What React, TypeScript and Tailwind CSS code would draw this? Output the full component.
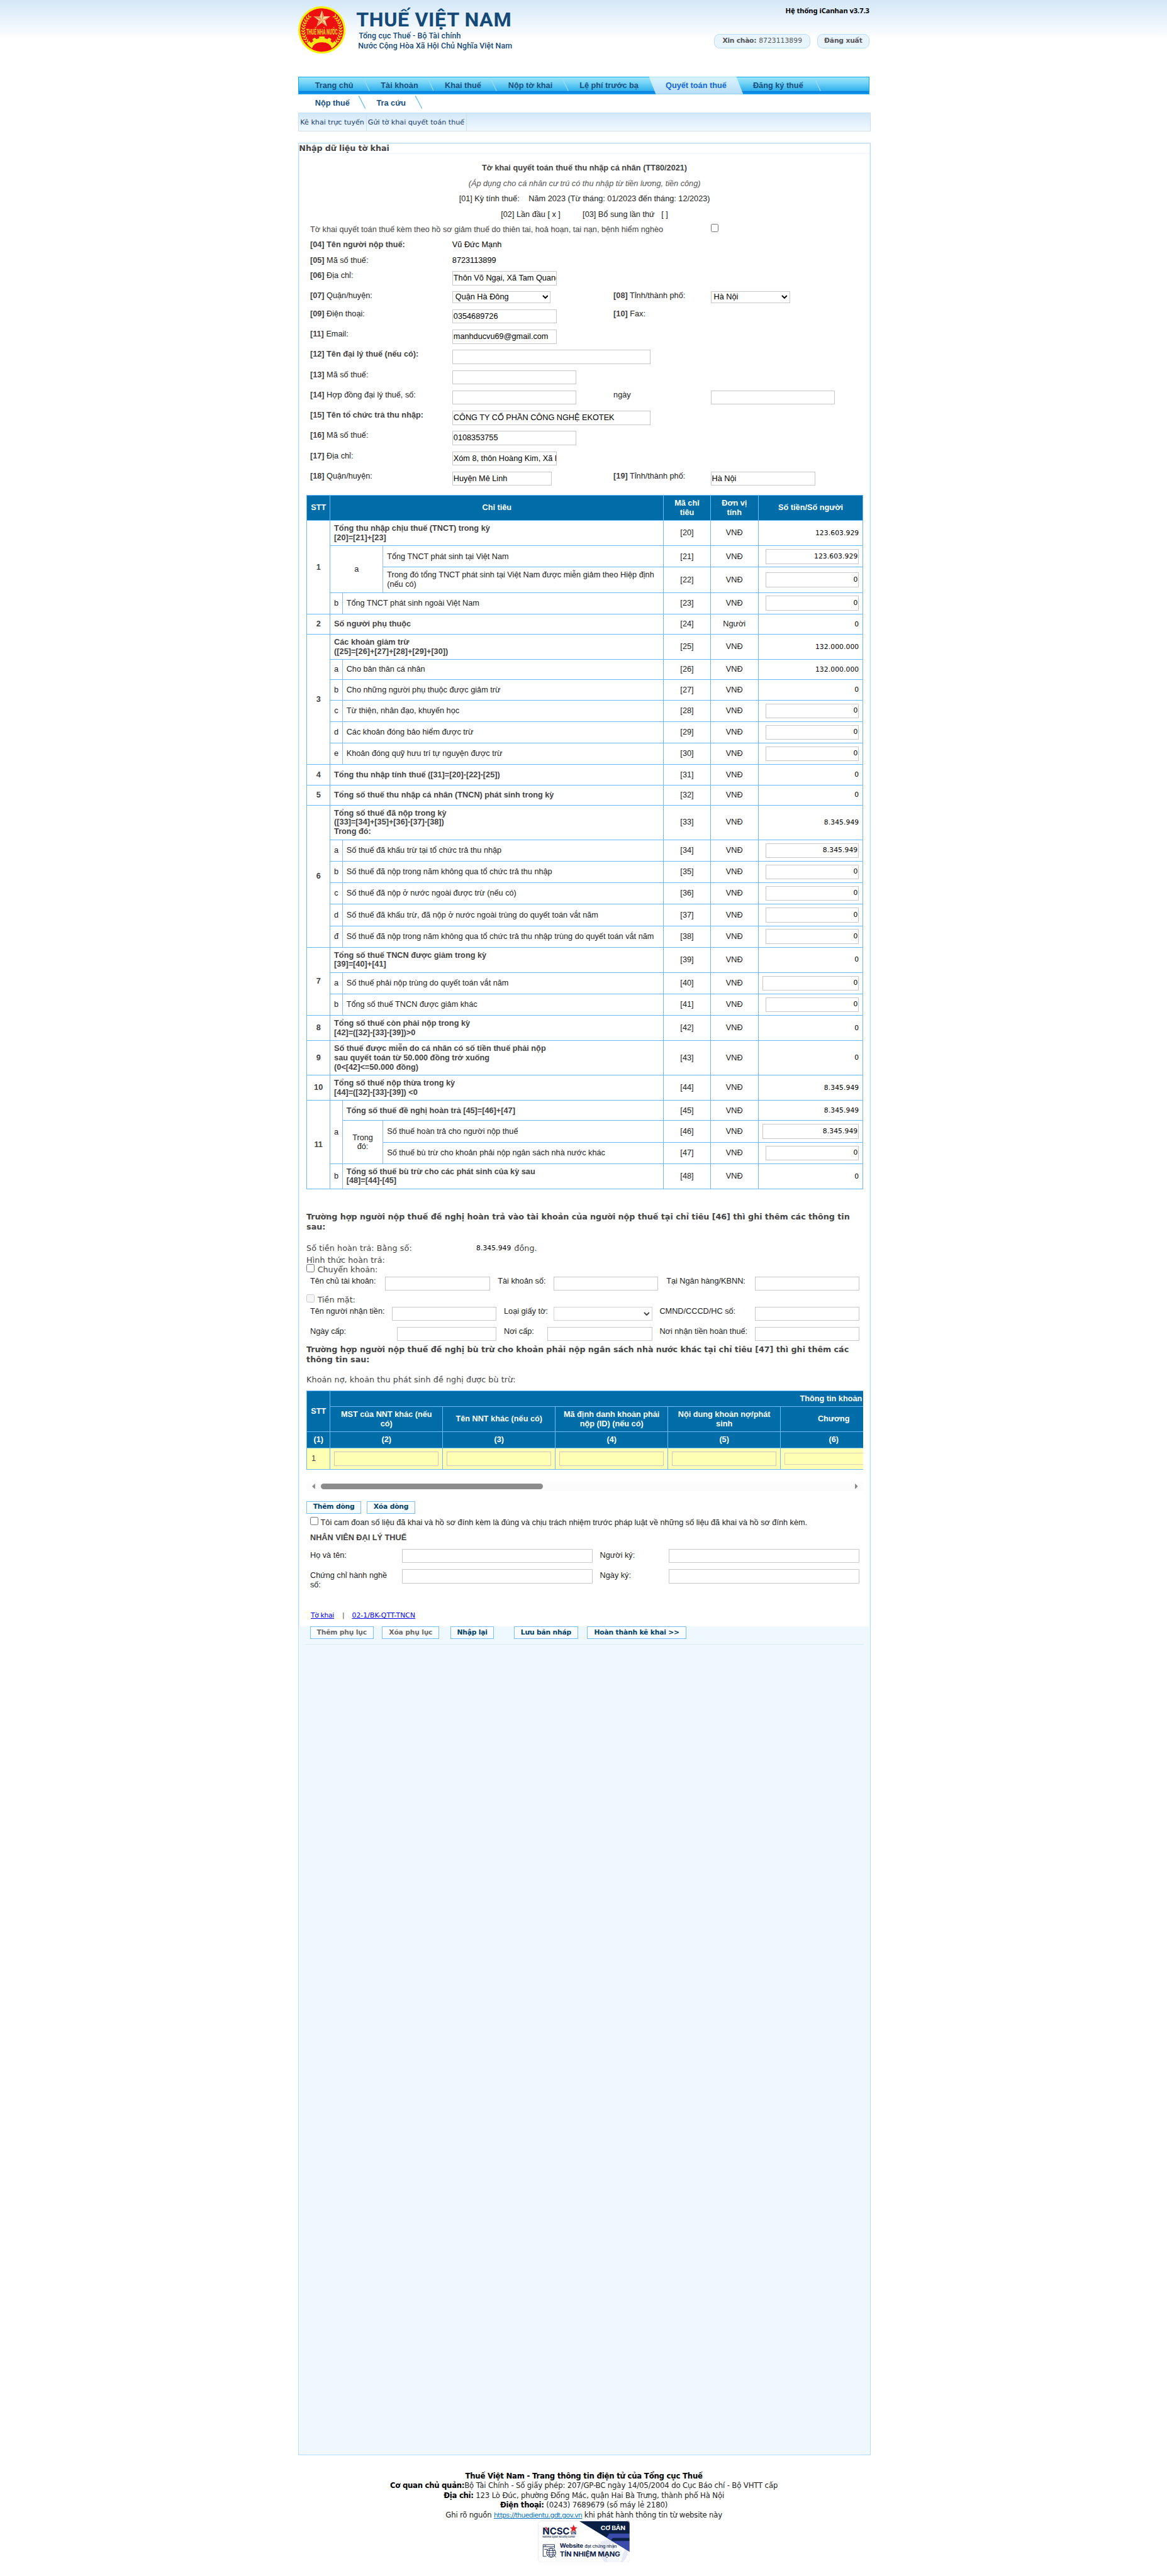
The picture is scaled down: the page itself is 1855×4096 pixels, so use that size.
import type { ReactNode } from "react";

const cx = (...c: (string | false | undefined)[]) => c.filter(Boolean).join(" ");

/* ---------- shared form controls ---------- */

function Box({ w, h = "h-[23px]", value = "", right, num }: { w: string; h?: string; value?: string; right?: boolean; num?: boolean }) {
  return (
    <div
      className={cx(
        "shrink-0 overflow-hidden whitespace-nowrap border border-[#c8c8c8] bg-white px-px text-black flex items-center",
        w,
        h,
        right && "justify-end",
        num ? "font-['DejaVu_Sans',sans-serif] text-[11px] tracking-[0.09px]" : "text-[13px]",
      )}
    >
      {value}
    </div>
  );
}

function Chevron() {
  return (
    <svg className="h-[7px] w-[10px]" viewBox="0 0 10 7" fill="none" stroke="currentColor" strokeWidth="2">
      <path d="M1 1l4 4 4-4" />
    </svg>
  );
}

function Select({ w, h = "h-[19px]", value = "", dim }: { w: string; h?: string; value?: string; dim?: boolean }) {
  return (
    <div className={cx("flex shrink-0 items-center justify-between border bg-white pl-1 pr-[3px] text-[13px]", w, h, dim ? "border-[#d4d4d4] text-[#444]" : "border-[#c8c8c8] text-black")}>
      <span>{value}</span>
      <Chevron />
    </div>
  );
}

function Check({ dim }: { dim?: boolean }) {
  return <div className={cx("size-[13px] shrink-0 rounded-[2.5px] border", dim ? "border-[#c9c9c9] bg-[#f6f6f6]" : "border-[#767676] bg-white")} />;
}

function Button({ w, children, dim }: { w: string; children: ReactNode; dim?: boolean }) {
  return (
    <div
      className={cx(
        "flex h-[21px] shrink-0 items-center justify-center whitespace-nowrap border border-[#79c0f9] bg-gradient-to-b from-white to-[#f3faff] pb-px font-['DejaVu_Sans',sans-serif] text-[11px] font-bold tracking-[-0.2px]",
        w,
        dim ? "text-[#6a6a6a]" : "text-[#004069]",
      )}
    >
      {children}
    </div>
  );
}

/* ---------- header ---------- */

const beads = Array.from({ length: 11 }, (_, i) => -42 + i * 8.4);

function Emblem() {
  return (
    <svg className="size-[77px] shrink-0" viewBox="0 0 77 77">
      <circle cx="38.5" cy="38.5" r="38.5" fill="#f8f20a" />
      <circle cx="38.5" cy="38.5" r="35.3" fill="#ee1010" />
      <g fill="none" stroke="#f3e21a" strokeWidth="1.6" strokeLinecap="round">
        {beads.map((a) => (
          <g key={a}>
            <path d="M8 37l-2.2-2.4M8.4 37l2.6-2.2" transform={`rotate(${a} 38.5 38.5)`} />
            <path d="M69 37l-2.6-2.2M69.2 37l2.2-2.4" transform={`rotate(${a} 38.5 38.5)`} />
          </g>
        ))}
      </g>
      <path d="M38.5 6.5l3.3 9.8 10.4.1-8.3 6.3 3 10-8.4-6-8.4 6 3-10-8.3-6.3 10.4-.1z" fill="#f4d9a0" />
      <path d="M38.5 6.5l3.3 9.8-3.3 6.5zM52.2 16.4l-8.3 6.3-5.4.1zM46.9 32.7l-8.4-6v-4zM30.1 32.7l3-10 5.4.1zM24.8 16.4l10.4-.1 3.3 6.5z" fill="#f08a4a" />
      <text x="38.5" y="46.5" textAnchor="middle" textLength="51" lengthAdjust="spacingAndGlyphs" fill="#f6d71c" className="font-['Roboto',sans-serif] text-[12.5px] font-bold">
        THUẾ NHÀ NƯỚC
      </text>
      <path
        d="M14 60l4-3.500 3 3 3.500-3-1.500-3 4-2.500 2.500 2.500 4.500-1.500v-3h9v3l4.500 1.500 2.500-2.500 4 2.500-1.500 3 3.500 3 3-3 4 3.500q-3.500 5-8.500 8.500-2.500-10-16-10t-16 10q-5-3.500-8.500-8.500z"
        fill="#f8ea14"
      />
    </svg>
  );
}

function Header() {
  return (
    <header className="flex h-[125px] w-[928px]">
      <div className="pt-[10px]">
        <Emblem />
      </div>
      <div className="ml-[17px] mt-[12px] whitespace-nowrap font-['Roboto',sans-serif] text-[#154a78]">
        <div className="h-[38px] text-[33px] font-bold leading-[39px] tracking-[0.6px]">THUẾ VIỆT NAM</div>
        <div className="ml-[4px] h-[16px] text-[12.7px] font-medium leading-[17px] tracking-[0.1px]">Tổng cục Thuế - Bộ Tài chính</div>
        <div className="ml-[3px] text-[12.7px] font-medium leading-[17px] tracking-[0.06px]">Nước Cộng Hòa Xã Hội Chủ Nghĩa Việt Nam</div>
      </div>
      <div className="ml-auto flex flex-col items-end font-['DejaVu_Sans',sans-serif] text-[11px]">
        <div className="mt-[10px] h-[45px] whitespace-nowrap font-['Noto_Sans',sans-serif] text-[11.5px] font-bold leading-[14px] tracking-[-0.1px] text-black">Hệ thống iCanhan v3.7.3</div>
        <div className="flex gap-[11px] whitespace-nowrap text-[#555]">
          <div className="flex h-[24px] w-[156px] items-center justify-center gap-1 rounded-[9px] border border-[#b9dcf8] bg-[#e9f5fe]">
            <b className="tracking-[-0.29px]">Xin chào:</b>
            <span className="tracking-[0.05px]">8723113899</span>
          </div>
          <div className="flex h-[24px] w-[85px] items-center justify-center rounded-[9px] border border-[#b9dcf8] bg-[#e9f5fe] font-bold tracking-[-0.2px]">Đăng xuất</div>
        </div>
      </div>
    </header>
  );
}

function Slash({ light }: { light?: boolean }) {
  return (
    <svg className="h-full w-[11px] shrink-0" viewBox="0 0 11 26" preserveAspectRatio="none" fill="none">
      <path d={light ? "M0 0l10.500 22" : "M0 1l11 23"} stroke={light ? "#9bdcf5" : "#5fc0ee"} strokeWidth="1.300" />
    </svg>
  );
}

const menu = [
  { t: "Trang chủ", w: "w-[82px]" },
  { t: "Tài khoản", w: "w-[78px]" },
  { t: "Khai thuế", w: "w-[77px]" },
  { t: "Nộp tờ khai", w: "w-[90px]" },
  { t: "Lệ phí trước bạ", w: "w-[116px]" },
  { t: "Quyết toán thuế", w: "", on: true },
  { t: "Đăng ký thuế", w: "w-[102px]" },
];

function Menu() {
  return (
    <>
      <nav className="flex h-[28px] w-[928px] whitespace-nowrap border border-[#0fa9ec] bg-[linear-gradient(180deg,#9de6fb_0%,#6fd0f5_38%,#2fb0ec_82%,#0c7ee2_86%,#1593e8_100%)] pl-[7px] text-[13px] font-bold leading-[26px] text-[#17507e]">
        {menu.map((m) =>
          m.on ? (
            <div
              key={m.t}
              className="-ml-[11px] -mr-[2px] -my-px flex h-[28px] w-[153px] shrink-0 bg-gradient-to-b from-[#daf5fd] to-[#b6dcf9] pl-[27px] leading-[28px] text-[#0f68dd] [clip-path:polygon(0_0,142px_0,153px_100%,11px_100%)]"
            >
              {m.t}
            </div>
          ) : (
            <div key={m.t} className="flex h-[26px] shrink-0">
              <span className={cx("pl-[18px]", m.w)}>
                <span className={m.t === "Trang chủ" ? "pl-[1px]" : ""}>{m.t}</span>
              </span>
              <span className="w-[15px]" />
              <Slash light />
            </div>
          ),
        )}
      </nav>
      <nav className="flex h-[30px] whitespace-nowrap pl-[27px] pt-px text-[13px] font-bold leading-[26px] text-[#17507e]">
        <span className="w-[71px]">Nộp thuế</span>
        <div className="h-[24px]">
          <Slash />
        </div>
        <span className="w-[81px] pl-[18px]">Tra cứu</span>
        <div className="h-[24px]">
          <Slash />
        </div>
      </nav>
      <div className="flex h-[31px] whitespace-nowrap border border-[#c5e1f8] border-b-[#d5dde4] bg-gradient-to-b from-[#d3e7f8] to-[#f1f9ff] font-['DejaVu_Sans',sans-serif] text-[11.4px] leading-[30px] text-[#17406e]">
        <span className="w-[110px] border-r border-[#c5e3fa] pl-[2px]">Kê khai trực tuyến</span>
        <span className="w-[163px] border-r border-[#c5e3fa] pl-[2px]">Gửi tờ khai quyết toán thuế</span>
      </div>
    </>
  );
}

/* ---------- taxpayer form ---------- */

function FormRow({ n, label, strong, children, n2, label2, extra, h = "h-[33px]" }: { n: string; label: string; strong?: boolean; children?: ReactNode; n2?: string; label2?: string; extra?: ReactNode; h?: string }) {
  return (
    <div className={cx("grid grid-cols-[231px_262px_158px_1fr] items-start whitespace-nowrap pl-[18px] pt-[5px] leading-[15px]", h)}>
      <div className={cx(strong && "font-bold")}>
        <b>{n}</b> <span className={strong ? "" : "text-[#222]"}>{label}</span>
      </div>
      <div className="text-black">{children}</div>
      <div>
        <b>{n2}</b> <span className="text-[#222]">{label2}</span>
      </div>
      <div>{extra}</div>
    </div>
  );
}

function TaxpayerForm() {
  return (
    <section className="text-[13px] text-[#444]">
      <div className="h-[25px] text-center font-bold leading-[24px]">Tờ khai quyết toán thuế thu nhập cá nhân (TT80/2021)</div>
      <div className="h-[25px] text-center italic leading-[24px] text-[#555]">(Áp dụng cho cá nhân cư trú có thu nhập từ tiền lương, tiền công)</div>
      <div className="flex h-[25px] justify-center leading-[24px] text-[#222]">
        <span>[01] Kỳ tính thuế:</span>
        <span className="ml-[15px]">Năm 2023 (Từ tháng: 01/2023 đến tháng: 12/2023)</span>
      </div>
      <div className="flex h-[25px] justify-center leading-[24px] text-[#222]">
        <span>[02] Lần đầu [ x ]</span>
        <span className="ml-[36px]">[03] Bổ sung lần thứ</span>
        <span className="ml-[11px]">[ ]</span>
      </div>
      <div className="flex h-[25px] pl-[18px] leading-[25px]">
        <span className="w-[651px] whitespace-nowrap">Tờ khai quyết toán thuế kèm theo hồ sơ giảm thuế do thiên tai, hoả hoạn, tai nạn, bệnh hiểm nghèo</span>
        <div className="pt-[3px]">
          <Check />
        </div>
      </div>
      <FormRow n="[04]" label="Tên người nộp thuế:" strong h="h-[25px]">Vũ Đức Mạnh</FormRow>
      <FormRow n="[05]" label="Mã số thuế:" h="h-[25px]">8723113899</FormRow>
      <FormRow n="[06]" label="Địa chỉ:"><Box w="w-[170px]" value="Thôn Võ Ngại, Xã Tam Quang" /></FormRow>
      <FormRow n="[07]" label="Quận/huyện:" h="h-[29px]" n2="[08]" label2="Tỉnh/thành phố:" extra={<Select w="w-[129px]" value="Hà Nội" />}>
        <Select w="w-[160px]" value="Quận Hà Đông" />
      </FormRow>
      <FormRow n="[09]" label="Điện thoại:" n2="[10]" label2="Fax:"><Box w="w-[170px]" value="0354689726" /></FormRow>
      <FormRow n="[11]" label="Email:"><Box w="w-[170px]" value="manhducvu69@gmail.com" /></FormRow>
      <FormRow n="[12]" label="Tên đại lý thuế (nếu có):" strong><Box w="w-[322px]" /></FormRow>
      <FormRow n="[13]" label="Mã số thuế:"><Box w="w-[202px]" /></FormRow>
      <div className="grid h-[33px] grid-cols-[231px_262px_158px_1fr] items-start whitespace-nowrap pl-[18px] pt-[5px] leading-[15px] text-[#222]">
        <div>
          <b className="text-[#444]">[14]</b> Hợp đồng đại lý thuế, số:
        </div>
        <Box w="w-[202px]" />
        <div>ngày</div>
        <Box w="w-[202px]" />
      </div>
      <FormRow n="[15]" label="Tên tổ chức trả thu nhập:" strong><Box w="w-[322px]" value="CÔNG TY CỔ PHẦN CÔNG NGHỆ EKOTEK" /></FormRow>
      <FormRow n="[16]" label="Mã số thuế:"><Box w="w-[202px]" value="0108353755" /></FormRow>
      <FormRow n="[17]" label="Địa chỉ:"><Box w="w-[170px]" value="Xóm 8, thôn Hoàng Kim, Xã Hoàng Kim" /></FormRow>
      <FormRow n="[18]" label="Quận/huyện:" n2="[19]" label2="Tỉnh/thành phố:" extra={<Box w="w-[170px]" value="Hà Nội" />}><Box w="w-[162px]" value="Huyện Mê Linh" /></FormRow>
    </section>
  );
}

/* ---------- declaration table ---------- */

type Row = {
  no?: string;
  span?: string;
  lead?: ReactNode;
  text: string;
  strong?: boolean;
  cols: string;
  code: string;
  unit?: string;
  value: string;
  input?: "n" | "w";
  h: string;
};

const line = "border-r border-b border-[#6ab9fb]";
const thin = "border-r border-b border-r-[#8fbfe6] border-b-[#6ab9fb]";

const Letter = ({ t, span = "" }: { t: string; span?: string }) => <div className={cx("flex items-center justify-center text-[#222]", thin, span)}>{t}</div>;

const rows: Row[] = [
  { no: "1", span: "row-span-4", text: "Tổng thu nhập chịu thuế (TNCT) trong kỳ\n[20]=[21]+[23]", strong: true, cols: "col-span-3", code: "20", value: "123.603.929", h: "h-[41px]" },
  { lead: <div className={cx("col-span-2 row-span-2 flex items-center justify-center text-[#222]", thin)}>a</div>, text: "Tổng TNCT phát sinh tại Việt Nam", cols: "col-span-1", code: "21", value: "123.603.929", input: "n", h: "h-[35px]" },
  { text: "Trong đó tổng TNCT phát sinh tại Việt Nam được miễn giảm theo Hiệp định\n(nếu có)", cols: "col-span-1", code: "22", value: "0", input: "n", h: "h-[41px]" },
  { lead: <Letter t="b" />, text: "Tổng TNCT phát sinh ngoài Việt Nam", cols: "col-span-2", code: "23", value: "0", input: "n", h: "h-[35px]" },
  { no: "2", text: "Số người phụ thuộc", strong: true, cols: "col-span-3", code: "24", unit: "Người", value: "0", h: "h-[33px]" },
  { no: "3", span: "row-span-6", text: "Các khoản giảm trừ\n([25]=[26]+[27]+[28]+[29]+[30])", strong: true, cols: "col-span-3", code: "25", value: "132.000.000", h: "h-[41px]" },
  { lead: <Letter t="a" />, text: "Cho bản thân cá nhân", cols: "col-span-2", code: "26", value: "132.000.000", h: "h-[33px]" },
  { lead: <Letter t="b" />, text: "Cho những người phụ thuộc được giảm trừ", cols: "col-span-2", code: "27", value: "0", h: "h-[33px]" },
  { lead: <Letter t="c" />, text: "Từ thiện, nhân đạo, khuyến học", cols: "col-span-2", code: "28", value: "0", input: "n", h: "h-[35px]" },
  { lead: <Letter t="d" />, text: "Các khoản đóng bảo hiểm được trừ", cols: "col-span-2", code: "29", value: "0", input: "n", h: "h-[35px]" },
  { lead: <Letter t="e" />, text: "Khoản đóng quỹ hưu trí tự nguyện được trừ", cols: "col-span-2", code: "30", value: "0", input: "n", h: "h-[35px]" },
  { no: "4", text: "Tổng thu nhập tính thuế ([31]=[20]-[22]-[25])", strong: true, cols: "col-span-3", code: "31", value: "0", h: "h-[33px]" },
  { no: "5", text: "Tổng số thuế thu nhập cá nhân (TNCN) phát sinh trong kỳ", strong: true, cols: "col-span-3", code: "32", value: "0", h: "h-[33px]" },
  { no: "6", span: "row-span-6", text: "Tổng số thuế đã nộp trong kỳ\n([33]=[34]+[35]+[36]-[37]-[38])\nTrong đó:", strong: true, cols: "col-span-3", code: "33", value: "8.345.949", h: "h-[56px]" },
  { lead: <Letter t="a" />, text: "Số thuế đã khấu trừ tại tổ chức trả thu nhập", cols: "col-span-2", code: "34", value: "8.345.949", input: "n", h: "h-[35px]" },
  { lead: <Letter t="b" />, text: "Số thuế đã nộp trong năm không qua tổ chức trả thu nhập", cols: "col-span-2", code: "35", value: "0", input: "n", h: "h-[35px]" },
  { lead: <Letter t="c" />, text: "Số thuế đã nộp ở nước ngoài được trừ (nếu có)", cols: "col-span-2", code: "36", value: "0", input: "n", h: "h-[35px]" },
  { lead: <Letter t="d" />, text: "Số thuế đã khấu trừ, đã nộp ở nước ngoài trùng do quyết toán vắt năm", cols: "col-span-2", code: "37", value: "0", input: "n", h: "h-[35px]" },
  { lead: <Letter t="đ" />, text: "Số thuế đã nộp trong năm không qua tổ chức trả thu nhập trùng do quyết toán vắt năm", cols: "col-span-2", code: "38", value: "0", input: "n", h: "h-[35px]" },
  { no: "7", span: "row-span-3", text: "Tổng số thuế TNCN được giảm trong kỳ\n[39]=[40]+[41]", strong: true, cols: "col-span-3", code: "39", value: "0", h: "h-[41px]" },
  { lead: <Letter t="a" />, text: "Số thuế phải nộp trùng do quyết toán vắt năm", cols: "col-span-2", code: "40", value: "0", input: "w", h: "h-[35px]" },
  { lead: <Letter t="b" />, text: "Tổng số thuế TNCN được giảm khác", cols: "col-span-2", code: "41", value: "0", input: "n", h: "h-[35px]" },
  { no: "8", text: "Tổng số thuế còn phải nộp trong kỳ\n[42]=([32]-[33]-[39])>0", strong: true, cols: "col-span-3", code: "42", value: "0", h: "h-[41px]" },
  { no: "9", text: "Số thuế được miễn do cá nhân có số tiền thuế phải nộp\nsau quyết toán từ 50.000 đồng trở xuống\n(0<[42]<=50.000 đồng)", strong: true, cols: "col-span-3", code: "43", value: "0", h: "h-[56px]" },
  { no: "10", text: "Tổng số thuế nộp thừa trong kỳ\n[44]=([32]-[33]-[39]) <0", strong: true, cols: "col-span-3", code: "44", value: "8.345.949", h: "h-[41px]" },
  { no: "11", span: "row-span-4", lead: <Letter t="a" span="row-span-3" />, text: "Tổng số thuế đề nghị hoàn trả [45]=[46]+[47]", strong: true, cols: "col-span-2", code: "45", value: "8.345.949", h: "h-[33px]" },
  { lead: <div className={cx("row-span-2 flex items-center justify-center px-2 text-center text-[#222]", thin)}>Trong đó:</div>, text: "Số thuế hoàn trả cho người nộp thuế", cols: "col-span-1", code: "46", value: "8.345.949", input: "w", h: "h-[35px]" },
  { text: "Số thuế bù trừ cho khoản phải nộp ngân sách nhà nước khác", cols: "col-span-1", code: "47", value: "0", input: "n", h: "h-[35px]" },
  { lead: <Letter t="b" />, text: "Tổng số thuế bù trừ cho các phát sinh của kỳ sau\n[48]=[44]-[45]", strong: true, cols: "col-span-2", code: "48", value: "0", h: "h-[41px]" },
];

function TableRow({ r }: { r: Row }) {
  return (
    <>
      {r.no && <div className={cx("flex items-center justify-center font-bold text-[#444]", line, r.span)}>{r.no}</div>}
      {r.lead}
      <div className={cx("flex items-center whitespace-pre pl-[6px]", line, r.cols, r.h, r.strong ? "font-bold text-[#444]" : "text-[#222]")}>{r.text}</div>
      <div className={cx("flex items-center justify-center text-[#222]", line)}>[{r.code}]</div>
      <div className={cx("flex items-center justify-center text-[#222]", line)}>{r.unit ?? "VNĐ"}</div>
      <div className={cx("flex items-center justify-end pr-[6px] text-black", line)}>
        {r.input ? (
          <Box w={r.input === "w" ? "w-[157px]" : "w-[152px]"} h="h-[24px]" value={r.value} right num />
        ) : (
          <span className="pt-px font-['DejaVu_Sans',sans-serif] text-[11px] tracking-[0.09px]">{r.value}</span>
        )}
      </div>
    </>
  );
}

const th = "flex items-center justify-center border-r border-b border-[#6ab9fb] bg-[#006da9] text-center font-bold text-white";

function DeclarationTable() {
  return (
    <section className="ml-[12px] mt-[10px] grid w-[905px] grid-cols-[38px_20px_66px_456px_76px_78px_170px] border-l border-t border-[#6ab9fb] text-[13px] leading-[15px]">
      <div className={cx(th, "h-[41px]")}>STT</div>
      <div className={cx(th, "col-span-3")}>Chỉ tiêu</div>
      <div className={cx(th, "px-3")}>Mã chỉ tiêu</div>
      <div className={cx(th, "px-3")}>Đơn vị tính</div>
      <div className={th}>Số tiền/Số người</div>
      {rows.map((r) => (
        <TableRow key={r.code} r={r} />
      ))}
    </section>
  );
}

/* ---------- refund details ---------- */

function Refund() {
  return (
    <section className="font-['DejaVu_Sans',sans-serif] text-[13px] leading-[16px] text-[#444]">
      <div className="ml-[12px] mt-[37px] h-[46px] w-[905px] whitespace-pre font-bold tracking-[-0.03px]">
        {"Trường hợp người nộp thuế đề nghị hoàn trả vào tài khoản của người nộp thuế tại chỉ tiêu [46] thì ghi thêm các thông tin\nsau:"}
      </div>
      <div className="ml-[12px] flex h-[25px] items-center whitespace-nowrap tracking-[0.08px]">
        <span className="w-[276px]">Số tiền hoàn trả: Bằng số:</span>
        <span className="mr-[5px] text-[11px] text-black">8.345.949</span>
        <span>đồng.</span>
      </div>
      <div className="ml-[12px] h-[13px] leading-[14px] tracking-[0.08px]">Hình thức hoàn trả:</div>
      <div className="ml-[12px] flex h-[15px] items-center gap-[5px]">
        <Check />
        <span className="pt-1">Chuyển khoản:</span>
      </div>
      <div className="ml-[18px] flex h-[31px] whitespace-nowrap pt-[6px] font-['Liberation_Sans',sans-serif] leading-[15px] text-[#222]">
        <span className="w-[122px]">Tên chủ tài khoản:</span>
        <Box w="w-[170px]" />
        <span className="ml-[13px] w-[91px]">Tài khoản số:</span>
        <Box w="w-[170px]" />
        <span className="ml-[13px] w-[144px]">Tại Ngân hàng/KBNN:</span>
        <Box w="w-[170px]" />
      </div>
      <div className="ml-[12px] flex h-[21px] items-center gap-[5px]">
        <Check dim />
        <span className="pt-1">Tiền mặt:</span>
      </div>
      <div className="ml-[18px] flex h-[33px] whitespace-nowrap pt-[3px] font-['Liberation_Sans',sans-serif] leading-[15px] text-[#222]">
        <span className="w-[133px]">Tên người nhận tiền:</span>
        <Box w="w-[170px]" />
        <span className="ml-[12px] w-[81px]">Loại giấy tờ:</span>
        <Select w="w-[160px]" h="h-[23px]" dim />
        <span className="ml-[12px] w-[155px]">CMND/CCCD/HC số:</span>
        <Box w="w-[170px]" />
      </div>
      <div className="ml-[18px] flex h-[32px] whitespace-nowrap pt-[3px] font-['Liberation_Sans',sans-serif] leading-[15px] text-[#222]">
        <span className="w-[141px]">Ngày cấp:</span>
        <Box w="w-[162px]" />
        <span className="ml-[12px] w-[71px]">Nơi cấp:</span>
        <Box w="w-[170px]" />
        <span className="ml-[12px] w-[155px]">Nơi nhận tiền hoàn thuế:</span>
        <Box w="w-[170px]" />
      </div>
      <div className="ml-[12px] h-[49px] whitespace-pre font-bold tracking-[-0.03px]">
        {"Trường hợp người nộp thuế đề nghị bù trừ cho khoản phải nộp ngân sách nhà nước khác tại chỉ tiêu [47] thì ghi thêm các\nthông tin sau:"}
      </div>
      <div className="ml-[12px] h-[25px] whitespace-nowrap tracking-[0.08px]">Khoản nợ, khoản thu phát sinh đề nghị được bù trừ:</div>
    </section>
  );
}

const offsetHeads = ["MST của NNT khác (nếu có)", "Tên NNT khác (nếu có)", "Mã định danh khoản phải nộp (ID) (nếu có)", "Nội dung khoản nợ/phát sinh", "Chương"];

function OffsetTable() {
  const cell = "flex items-center justify-center border-r border-b border-[#6ab9fb] bg-[#ffffb3]";
  return (
    <section className="ml-[12px] w-[905px] text-[13px] leading-[15px]">
      <div className="overflow-hidden">
        <div className="grid w-[1080px] grid-cols-[38px_183px_183px_183px_183px_173px_136px] border-l border-t border-[#6ab9fb]">
          <div className={cx(th, "row-span-2")}>STT</div>
          <div className={cx(th, "col-span-6 h-[26px] !justify-start pl-[763px]")}>Thông tin khoản</div>
          {offsetHeads.map((t) => (
            <div key={t} className={cx(th, "h-[41px] px-[10px]")}>{t}</div>
          ))}
          <div className={th} />
          {["(1)", "(2)", "(3)", "(4)", "(5)", "(6)"].map((t) => (
            <div key={t} className={cx(th, "h-[26px]")}>{t}</div>
          ))}
          <div className={th} />
          <div className={cx(cell, "h-[35px] !justify-start pl-[7px] text-[#444]")}>1</div>
          {[2, 3, 4, 5].map((t) => (
            <div key={t} className={cell}>
              <div className="h-[23px] w-[170px] border border-[#c8c8c8]" />
            </div>
          ))}
          <div className={cell}>
            <div className="h-[19px] w-[160px] border border-[#d4d4c0]" />
          </div>
          <div className={cell} />
        </div>
      </div>
      <div className="mt-[20px] flex h-[15px] items-center bg-[#fcfcfc] px-[9px] text-[#8b8b8b]">
        <svg className="h-[9px] w-[5px]" viewBox="0 0 5 9" fill="currentColor">
          <path d="M5 0v9L0 4.500z" />
        </svg>
        <div className="ml-[9px] h-[9px] w-[361px] rounded-full bg-[#8b8b8b]" />
        <svg className="ml-auto h-[9px] w-[5px]" viewBox="0 0 5 9" fill="currentColor">
          <path d="M0 0v9l5-4.500z" />
        </svg>
      </div>
      <div className="mt-[16px] flex gap-[9px]">
        <Button w="w-[89px]">Thêm dòng</Button>
        <Button w="w-[79px]">Xóa dòng</Button>
      </div>
    </section>
  );
}

function AgentRow({ a, b }: { a: string; b: string }) {
  return (
    <div className="flex h-[33px] pl-[18px] leading-[15px] text-[#222]">
      <span className="w-[149px] whitespace-pre pt-[3px]">{a}</span>
      <Box w="w-[310px]" />
      <span className="w-[124px] pl-[12px] pt-[3px]">{b}</span>
      <Box w="w-[310px]" />
    </div>
  );
}

function Signature() {
  return (
    <section className="text-[13px]">
      <div className="mt-[5px] flex h-[22px] gap-[4px] whitespace-nowrap pl-[18px] leading-[18px] text-[#222]">
        <Check />
        <span>Tôi cam đoan số liệu đã khai và hồ sơ đính kèm là đúng và chịu trách nhiệm trước pháp luật về những số liệu đã khai và hồ sơ đính kèm.</span>
      </div>
      <div className="h-[30px] whitespace-nowrap pl-[18px] font-bold leading-[23px] text-[#444]">NHÂN VIÊN ĐẠI LÝ THUẾ</div>
      <AgentRow a="Họ và tên:" b="Người ký:" />
      <AgentRow a={"Chứng chỉ hành nghề\nsố:"} b="Ngày ký:" />
      <div className="mt-[31px] flex h-[24px] items-center pl-[19px] font-['DejaVu_Sans',sans-serif] text-[11px] text-[#444]">
        <span className="w-[39px] whitespace-nowrap tracking-[-0.3px] text-[#0000ee] underline">Tờ khai</span>
        <span className="w-[28px] text-center">|</span>
        <span className="tracking-[0.1px] text-[#0000ee] underline">02-1/BK-QTT-TNCN</span>
      </div>
    </section>
  );
}

/* ---------- footer ---------- */

function TrustBadge() {
  return (
    <svg className="h-[68px] w-[150px]" viewBox="0 0 150 68">
      <defs>
        <clipPath id="badge">
          <rect width="150" height="68" rx="5" />
        </clipPath>
      </defs>
      <g clipPath="url(#badge)">
        <rect width="150" height="68" fill="#fff" />
        <path d="M102 34l22-6 22 6v20q-4 12-10 14h-26q-8-6-8-16z" fill="#e6e8f6" />
        <path d="M110 40l14-4 14 4q2 18-4 28h-20q-5-10-4-28z" fill="#f5f6fc" />
        <path d="M129 49q1-6 6-5t3 6q-4 4-4 7M134 61v4" fill="none" stroke="#fff" strokeWidth="4" />
        <path d="M66 0h84v51z" fill="#0a1f44" />
        <path d="M112 27l4-6h34v8h-28l-3 4h31v18z" fill="#3a4bab" />
        <path d="M119 31l3-3h28v4h-27z" fill="#0a1f44" />
      </g>
      <rect x=".5" y=".5" width="149" height="67" rx="5" fill="none" stroke="#e9ebf3" />
      <g className="font-['Inter',sans-serif] font-bold" fill="#0f1f4a">
        <text x="7.500" y="22" textLength="44" lengthAdjust="spacingAndGlyphs" className="text-[15px]">NCSC</text>
        <text x="53" y="22.500" textLength="9" lengthAdjust="spacingAndGlyphs" className="text-[6px]">VN</text>
        <text x="7.500" y="28" textLength="53" lengthAdjust="spacingAndGlyphs" className="text-[4px] font-medium">National Cyber Security Center</text>
        <text x="102" y="15.500" textLength="40" lengthAdjust="spacingAndGlyphs" fill="#fff" className="text-[9px]">CƠ BẢN</text>
        <text x="35.500" y="43.500" textLength="38" lengthAdjust="spacingAndGlyphs" className="text-[8.500px]">Website</text>
        <text x="76" y="43.500" textLength="52" lengthAdjust="spacingAndGlyphs" className="text-[6px] font-medium">đạt chứng nhận</text>
        <text x="35.500" y="58" textLength="98" lengthAdjust="spacingAndGlyphs" className="text-[10px]">TÍN NHIỆM MẠNG</text>
      </g>
      <path d="M12.500 10.500l3.500 4.700" stroke="#d8232a" strokeWidth="2" />
      <path d="M58 6.500l1.700 4.200 4.500.3-3.400 2.900 1.100 4.400-3.900-2.400-3.800 2.400 1-4.400-3.400-2.900 4.500-.3z" fill="#e01f26" />
      <g fill="none" stroke="#0f1f4a" strokeWidth=".9">
        <path d="M14 58H8.500V39H27v6M8.500 42.500H27M10.500 40.700h3M10.500 46.500h5" />
        <circle cx="21.500" cy="52" r="7.500" fill="#fff" />
        <ellipse cx="21.500" cy="52" rx="3.300" ry="7.500" />
        <path d="M14 52h15M15 48.500h13M15 55.500h13M26.500 56.500l3 3" />
      </g>
    </svg>
  );
}

function Footer() {
  return (
    <footer className="flex w-[928px] flex-col items-center whitespace-nowrap pt-[26px] font-['DejaVu_Sans',sans-serif] text-[12px] leading-[16px] tracking-[-0.17px] text-[#222]">
      <b className="tracking-[-0.23px] text-black">Thuế Việt Nam - Trang thông tin điện tử của Tổng cục Thuế</b>
      <div><b className="tracking-[-0.3px] text-black">Cơ quan chủ quản:</b>Bộ Tài Chính - Số giấy phép: 207/GP-BC ngày 14/05/2004 do Cục Báo chí - Bộ VHTT cấp</div>
      <div><b className="tracking-[-0.3px] text-black">Địa chỉ:</b> 123 Lò Đúc, phường Đống Mác, quận Hai Bà Trưng, thành phố Hà Nội</div>
      <div><b className="tracking-[-0.3px] text-black">Điện thoại:</b> (0243) 7689679 (số máy lẻ 2180)</div>
      <div className="tracking-[-0.24px]">Ghi rõ nguồn <span className="text-[11px] tracking-[-0.6px] text-[#0072c6] underline">https://thuedientu.gdt.gov.vn</span> khi phát hành thông tin từ website này</div>
      <TrustBadge />
    </footer>
  );
}

export default function App() {
  return (
    <div className="h-[4096px] w-full overflow-hidden bg-white">
      <div className="h-[4188px] w-[1897px] bg-[linear-gradient(180deg,#d3e7f8_0px,#ffffff_64px)] pl-[485px] font-['Liberation_Sans',sans-serif] [zoom:0.978]">
        <div className="w-[930px]">
          <Header />
          <Menu />
          <main className="mt-[18px] flex h-[3760px] flex-col border border-[#b5dbfd] bg-[#f0f8ff]">
            <div className="h-[2411px] border-x-2 border-t-2 border-[#e4f2fe] bg-white">
              <h1 className="-ml-[2px] h-[14px] whitespace-nowrap pl-px font-['DejaVu_Sans',sans-serif] text-[13px] font-bold leading-[14px] tracking-[-0.07px] text-[#444]">Nhập dữ liệu tờ khai</h1>
              <div className="mb-[10px] h-[3px] bg-[#f3f9fe]" />
              <div className="-mx-px">
                <TaxpayerForm />
                <DeclarationTable />
                <Refund />
                <OffsetTable />
                <Signature />
              </div>
            </div>
            <div className="flex pl-[18px]">
              <Button w="w-[103px]" dim>Thêm phụ lục</Button>
              <div className="w-[14px]" />
              <Button w="w-[93px]" dim>Xóa phụ lục</Button>
              <div className="w-[18px]" />
              <Button w="w-[71px]">Nhập lại</Button>
              <div className="w-[32px]" />
              <Button w="w-[105px]">Lưu bản nháp</Button>
              <div className="w-[14px]" />
              <Button w="w-[162px]">Hoàn thành kê khai &gt;&gt;</Button>
            </div>
            <div className="mx-[10px] mt-[8px] h-px bg-[#d3ebff]" />
          </main>
          <Footer />
        </div>
      </div>
    </div>
  );
}
